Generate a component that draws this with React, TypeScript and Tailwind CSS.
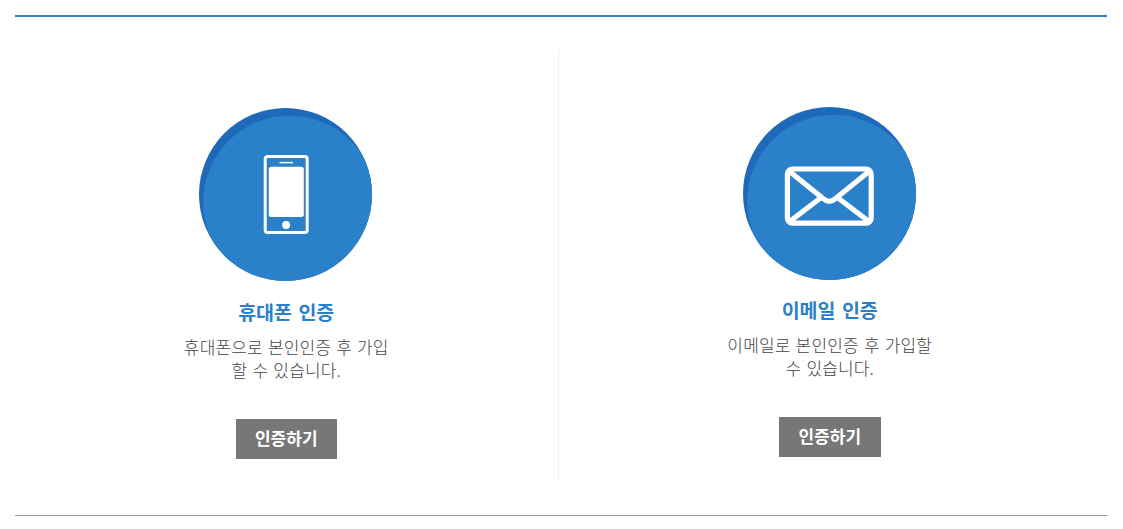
import type { ReactNode } from "react";

const Badge = ({ id, children }: { id: string; children: ReactNode }) => (
  <svg className="block h-[174px] w-[174px] shrink-0" viewBox="0 0 174 174" fill="none">
    <clipPath id={id}>
      <circle cx="86.5" cy="86.5" r="86.5" />
    </clipPath>
    <circle cx="86.5" cy="86.5" r="86.5" fill="#1e69b9" />
    <circle cx="90.7" cy="94.2" r="86.5" fill="#2a81c9" clipPath={`url(#${id})`} />
    {children}
  </svg>
);

const PhoneIcon = () => (
  <Badge id="phone-badge">
    <rect x="66.2" y="48.6" width="42" height="76" rx="2.5" stroke="#fff" strokeWidth="3" />
    <path d="M80.5 54.6h13.5" stroke="#fff" strokeWidth="1.5" />
    <rect x="69.8" y="58.8" width="35" height="50.2" rx="2.5" fill="#fff" />
    <circle cx="87.1" cy="117" r="4" fill="#fff" />
  </Badge>
);

const MailIcon = () => (
  <Badge id="mail-badge">
    <g stroke="#fff" strokeWidth="5.2">
      <rect x="44.4" y="62" width="83.8" height="54.2" rx="5" />
      <path d="M46 64 81 92.2Q86.3 96.4 91.6 92.2L126.6 64M46 115 78.5 90.2M126.6 115 94.1 90.2" />
    </g>
  </Badge>
);

type MethodProps = {
  icon: ReactNode;
  title: string;
  lines: string[];
};

const Method = ({ icon, title, lines }: MethodProps) => (
  <div className="flex flex-col items-center text-center">
    {icon}
    <p className="text-[19.5px] leading-[30px] font-bold [word-spacing:2px] text-[#2a81c9]">{title}</p>
    <p className="mt-[9px] h-[46px] text-[17px] leading-[22.7px] font-light tracking-[0.15px] [word-spacing:1.2px] text-[#444]">
      {lines[0]}
      <br />
      {lines[1]}
    </p>
    <button className="mt-[37px] h-10 w-[101.5px] bg-[#777] pb-0.5 text-[17px] font-bold text-white">
      인증하기
    </button>
  </div>
);

export default function App() {
  return (
    <div className="h-[529px] bg-white px-[15px] pt-[15px] font-['Noto_Sans_CJK_KR',sans-serif]">
      <div className="flex h-[501px] w-[1092px] border-t-2 border-b border-t-[#2a81c9] border-b-[#999] pt-[33px]">
        <div className="h-[431px] w-[544px] border-r border-[#eee] pt-[58px] pr-[0.5px]">
          <Method
            icon={<div className="h-[189px]"><PhoneIcon /></div>}
            title="휴대폰 인증"
            lines={["휴대폰으로 본인인증 후 가입", "할 수 있습니다."]}
          />
        </div>
        <div className="w-[541.5px] pt-[57px]">
          <Method
            icon={<div className="h-[188px]"><MailIcon /></div>}
            title="이메일 인증"
            lines={["이메일로 본인인증 후 가입할", "수 있습니다."]}
          />
        </div>
      </div>
    </div>
  );
}
